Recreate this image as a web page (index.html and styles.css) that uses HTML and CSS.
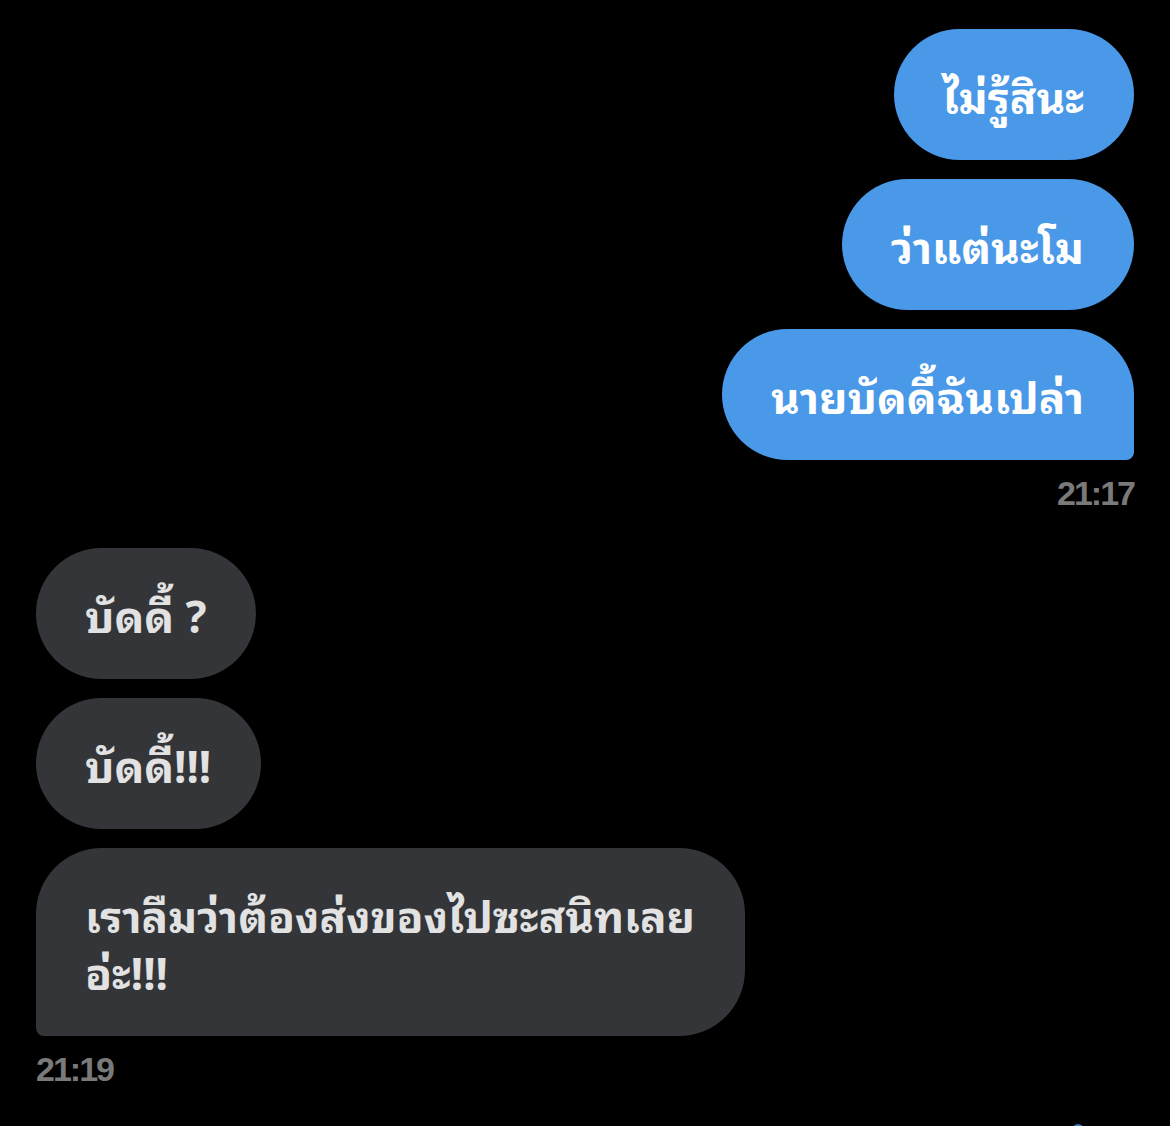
FILE: index.html
```html
<!DOCTYPE html>
<html lang="th">
<head>
    <meta charset="UTF-8">
    <meta name="viewport" content="width=device-width, initial-scale=1.0">
    <link rel="stylesheet" href="styles.css">
    <title>Chat</title>
</head>
<body>
    <div class="chat">
        <div class="group outgoing">
            <div class="bubble">ไม่รู้สินะ</div>
            <div class="bubble">ว่าแต่นะโม</div>
            <div class="bubble last">นายบัดดี้ฉันเปล่า</div>
            <div class="time">21:17</div>
        </div>
        <div class="group incoming">
            <div class="bubble">บัดดี้ ?</div>
            <div class="bubble">บัดดี้!!!</div>
            <div class="bubble last">เราลืมว่าต้องส่งของไปซะสนิทเลย<br>อ่ะ!!!</div>
            <div class="time">21:19</div>
        </div>
        <div class="scroll-dot"></div>
    </div>
</body>
</html>
```
FILE: styles.css
```css
/* Global */
body {
    margin: 0;
    padding: 0;
    background-color: #000000;
    font-family: "Noto Sans Thai Looped", "Loma", "Garuda", "Noto Sans Thai", "Noto Sans", sans-serif;
    overflow: hidden;
}

.chat {
    padding: 29px 36px 0 36px;
    display: flex;
    flex-direction: column;
    gap: 37px;
}

/* Message groups */
.group {
    display: flex;
    flex-direction: column;
    gap: 19px;
}

.outgoing {
    align-items: flex-end;
}

.incoming {
    align-items: flex-start;
}

.bubble {
    padding: 37px 50px 37px 49px;
    font-size: 44px;
    font-weight: bold;
    line-height: 57px;
    border-radius: 66px;
}

.outgoing .bubble {
    background-color: #4a98e8;
    color: #ffffff;
}

.outgoing .bubble.last {
    border-bottom-right-radius: 8px;
}

.incoming .bubble {
    background-color: #333538;
    color: #e2e2e2;
}

.incoming .bubble.last {
    border-bottom-left-radius: 8px;
}

.time {
    margin-top: -4px;
    font-family: "Liberation Sans", sans-serif;
    font-size: 34px;
    font-weight: bold;
    letter-spacing: -2px;
    color: #7a7a7a;
    line-height: 36px;
}

.scroll-dot {
    align-self: flex-end;
    width: 12px;
    height: 12px;
    margin-right: 50px;
    margin-top: 0;
    border-radius: 50%;
    background-color: #3a7cc4;
}
```
